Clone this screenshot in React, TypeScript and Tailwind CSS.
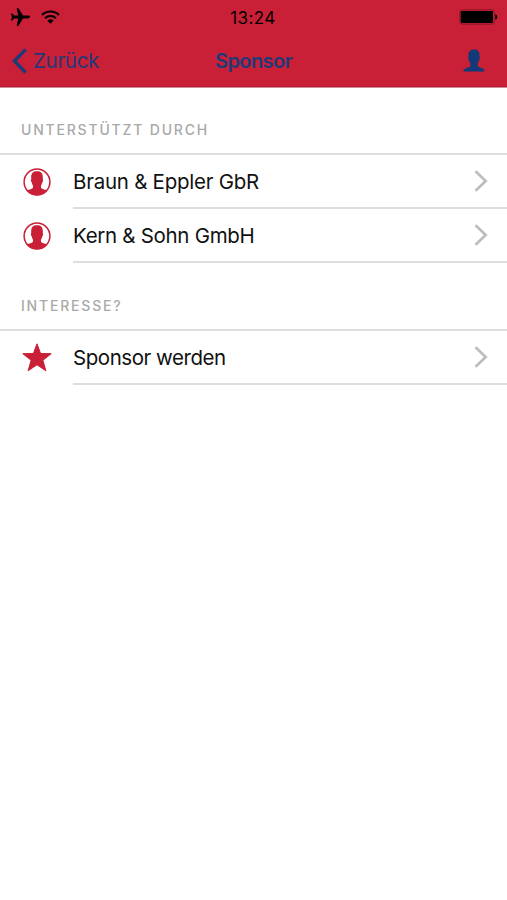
import React from "react";

type IconKind = "person" | "star";

interface ListEntry {
  label: string;
  icon: IconKind;
  textClass: string;
}

interface ListSectionProps {
  title: string;
  entries: ListEntry[];
}

const sections: ListSectionProps[] = [
  {
    title: "UNTERSTÜTZT DURCH",
    entries: [
      { label: "Braun & Eppler GbR", icon: "person", textClass: "tracking-[-0.25px]" },
      { label: "Kern & Sohn GmbH", icon: "person", textClass: "tracking-[-0.3px]" },
    ],
  },
  {
    title: "INTERESSE?",
    entries: [{ label: "Sponsor werden", icon: "star", textClass: "tracking-[-0.45px]" }],
  },
];

const AirplaneIcon = () => (
  <svg className="h-[18px] w-5" viewBox="0 0 20 18" fill="currentColor">
    <path d="M20 9c0-.9-1.2-1.4-2.500-1.400h-4.500L8.500.3H6.600l1.800 7.300H4.200L2.500 5.400H.9L1.900 9 .9 12.600h1.600l1.700-2.200h4.200L6.600 17.700h1.900l4.500-7.300h4.500C18.800 10.400 20 9.900 20 9z" />
  </svg>
);

const WifiIcon = () => (
  <svg className="h-[14px] w-[19px]" viewBox="0 0 19 14" fill="none" stroke="currentColor" strokeWidth="2">
    <path d="M1 5a12.2 12.2 0 0 1 17 0" />
    <path d="M4 8.2a8 8 0 0 1 11 0" />
    <path d="M9.5 13.7 6.4 10.7a4.5 4.5 0 0 1 6.2 0z" fill="currentColor" stroke="none" />
  </svg>
);

const BatteryIcon = () => (
  <svg className="h-4 w-[39px]" viewBox="0 0 39 16">
    <rect x="0.8" y="0.8" width="34.6" height="14.4" rx="2.5" fill="none" stroke="#000" strokeOpacity="0.3" />
    <rect x="1.7" y="2" width="32.3" height="12" rx="1.2" fill="#000" />
    <path d="M36.3 5.3c1.4.4 2 1.5 2 2.7s-.6 2.3-2 2.7z" fill="#000" />
  </svg>
);

const ProfileIcon = () => (
  <svg className="h-[23px] w-[22px]" viewBox="0 0 22 23" fill="currentColor">
    <path d="M11 .5c3.6 0 5.5 2 5.5 5.4v2c.7.3.5 2.6-.5 3.100-.3 1.500-.7 2.500-1.400 3.300v2.500c0 .8 1 1.300 2.400 1.700 2.400.8 4.400 1.500 4.700 4.100H.3c.3-2.600 2.300-3.300 4.700-4.100 1.400-.4 2.400-.9 2.400-1.700v-2.500c-.7-.8-1.100-1.800-1.400-3.300-1-.5-1.200-2.800-.5-3.100v-2C5.500 2.500 7.400.5 11 .5z" />
  </svg>
);

// Head and shoulders inside a ring
const PersonIcon = () => (
  <svg className="h-7 w-7" viewBox="0 0 28 28">
    <circle cx="14" cy="14" r="12.9" fill="none" stroke="currentColor" strokeWidth="1.5" />
    <path
      d="M14 3.3c4 0 5.8 2 5.8 5.5v2.500c.6.400.3 2.500-.5 3-.3 1.600-.8 2.700-1.300 3.400v2.100c.5 1.200 3.600 1.600 6.200 2.900C21.700 25.700 18.200 27.300 14 27.300S6.300 25.700 3.800 22.700c2.600-1.300 5.700-1.700 6.200-2.900v-2.100c-.5-.7-1-1.800-1.300-3.400-.8-.5-1.100-2.600-.5-3V8.800c0-3.500 1.800-5.500 5.800-5.500z"
      fill="currentColor"
    />
  </svg>
);

const StarIcon = () => (
  <svg className="h-[29px] w-[30px]" viewBox="0 0 30 29" fill="currentColor" stroke="currentColor" strokeLinejoin="round">
    <path d="M15 .8 18.6 10.500 29.200 10.700 20.900 17.300 23.900 27.800 15 21.800 6.100 27.800 9.100 17.300 .8 10.700 11.400 10.500z" />
  </svg>
);

const ChevronIcon = () => (
  <svg className="h-[22px] w-[14px]" viewBox="0 0 14 22" fill="none" stroke="#bdbdc0" strokeWidth="2.7">
    <path d="M1.5 1.3 11.7 11 1.5 20.7" />
  </svg>
);

const ListSection: React.FC<ListSectionProps> = ({ title, entries }) => (
  <section>
    <h2 className="flex h-[68px] items-end border-b-2 border-[#dedede] pb-[15px] pl-[21px] text-[14px] leading-[17px] font-medium tracking-[1.8px] text-[#a9a9a9]">
      {title}
    </h2>
    <ul>
      {entries.map((entry) => (
        <li key={entry.label} className="flex h-[54px]">
          <div className="flex w-[73px] items-center justify-center pb-px text-[#c91f37]">
            {entry.icon === "person" ? <PersonIcon /> : <StarIcon />}
          </div>
          <div className="flex flex-1 items-center justify-between border-b-2 border-[#dedede] pr-[19px]">
            <span className={`pt-px text-[20.5px] leading-6 whitespace-nowrap text-[#111] ${entry.textClass}`}>
              {entry.label}
            </span>
            <ChevronIcon />
          </div>
        </li>
      ))}
    </ul>
  </section>
);

const App: React.FC = () => {
  return (
    <div className="h-[900px] w-[507px] overflow-hidden bg-white font-['Inter','Liberation_Sans',sans-serif]">
      <header className="h-[88px] border-b border-[#d98995] bg-[#c91f37]">
        <div className="grid h-[34px] grid-cols-3 items-center pr-[9px] pl-[10px] text-black">
          <div className="flex items-center gap-[11px]">
            <AirplaneIcon />
            <WifiIcon />
          </div>
          <span className="pt-px pr-0.5 text-center text-[17px] leading-5 tracking-[0.4px]">13:24</span>
          <div className="flex justify-end">
            <BatteryIcon />
          </div>
        </div>
        <nav className="grid h-[53px] grid-cols-[1fr_auto_1fr] items-center border-b border-[#ad2037] pt-px pr-[22px] pl-3 text-[#203a78]">
          <button className="flex items-center gap-[6px] text-left">
            <svg className="h-[26px] w-[15px]" viewBox="0 0 15 26" fill="none" stroke="currentColor" strokeWidth="3.5">
              <path d="M13.7 1.4 2.5 13 13.7 24.6" />
            </svg>
            <span className="text-[20.5px] leading-6 tracking-[-0.3px]">Zurück</span>
          </button>
          <h1 className="pl-[10px] text-center text-[20px] leading-6 font-semibold tracking-[-0.55px]">Sponsor</h1>
          <button className="flex justify-end text-[#123a79]">
            <ProfileIcon />
          </button>
        </nav>
      </header>
      <main className="-mt-px">
        {sections.map((section) => (
          <ListSection key={section.title} {...section} />
        ))}
      </main>
    </div>
  );
};

export default App;
